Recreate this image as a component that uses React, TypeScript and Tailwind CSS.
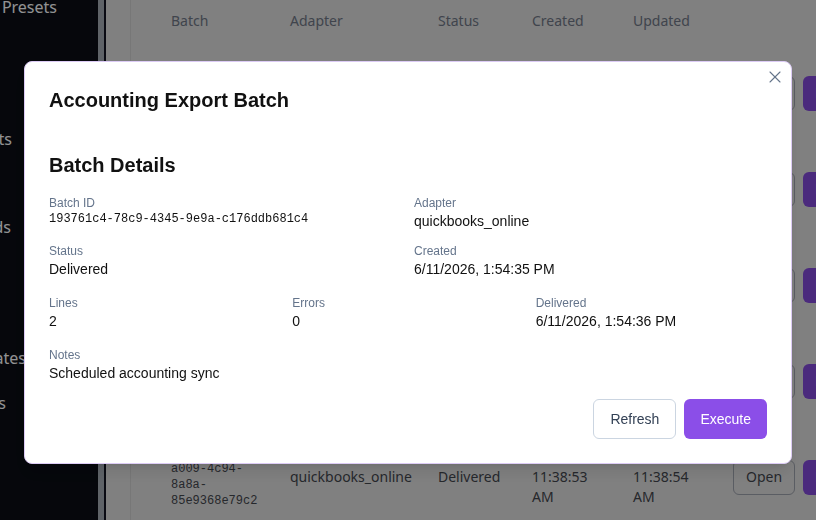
import { X } from "lucide-react";

type Row = {
  id: string;
  adapter: string;
  status: string;
  created: string;
  updated: string;
};

const rows: Row[] = [
  {
    id: "193761c4-78c9-4345-9e9a-c176ddb681c4",
    adapter: "quickbooks_online",
    status: "Delivered",
    created: "6/11/2026, 1:54:35 PM",
    updated: "6/11/2026, 1:54:36 PM",
  },
  {
    id: "7c02ae51-3b1d-4f6e-b2a0-19d4c7e0f3a8",
    adapter: "quickbooks_online",
    status: "Delivered",
    created: "6/11/2026, 12:40:12 PM",
    updated: "6/11/2026, 12:40:13 PM",
  },
  {
    id: "e4f9b830-61ac-4d27-9c5e-0a7b2d1e6f54",
    adapter: "xero",
    status: "Delivered",
    created: "6/11/2026, 12:02:47 PM",
    updated: "6/11/2026, 12:02:49 PM",
  },
  {
    id: "2ab8d6c1-95e3-47f0-8d1b-c3e50f9a72d6",
    adapter: "quickbooks_online",
    status: "Failed",
    created: "6/11/2026, 11:51:20 AM",
    updated: "6/11/2026, 11:51:22 AM",
  },
  {
    id: "5d2e1f07-a009-4c94-8a8a-85e9368e79c2",
    adapter: "quickbooks_online",
    status: "Delivered",
    created: "6/11/2026, 11:38:53 AM",
    updated: "6/11/2026, 11:38:54 AM",
  },
];

function Field({ label, children }: { label: string; children: React.ReactNode }) {
  return (
    <div>
      <div className="text-xs leading-4 text-[#64748b]">{label}</div>
      {children}
    </div>
  );
}

export default function App() {
  return (
    <div className="relative h-[520px] w-[816px] overflow-hidden">
      {/* page behind the dialog */}
      <div className="flex h-full font-['Noto_Sans',sans-serif]">
        <div className="flex h-full">
          <div className="flex h-full w-[98px] flex-col overflow-hidden bg-[#0a0c14] text-base leading-6 text-[#f3f4f6]">
            <div className="-mt-[5px] flex w-[57px] justify-end whitespace-nowrap">Export Presets</div>
            <div className="mt-[108px] flex w-[12px] justify-end whitespace-nowrap">Accounts</div>
            <div className="mt-[64px] flex w-[11px] justify-end whitespace-nowrap">Payment Methods</div>
            <div className="mt-[107px] flex w-[26px] justify-end whitespace-nowrap">Templates</div>
            <div className="mt-[21px] flex w-[6px] justify-end whitespace-nowrap">Settings</div>
          </div>
          <div className="h-full w-[6px] bg-[#9ea5ae]" />
          <div className="h-full w-[2px] bg-[#111320]" />
        </div>

        <main className="h-full flex-1 overflow-hidden bg-[#d5d5d5] pl-6">
          <div className="h-full border-l border-[#c6c6c6] pl-[40px] text-sm leading-5">
            <div className="grid h-[45px] grid-cols-[119px_148px_94px_101px_100px_1fr] items-start pt-[11px] text-[#6b7280]">
              <div>Batch</div>
              <div>Adapter</div>
              <div>Status</div>
              <div>Created</div>
              <div>Updated</div>
              <div />
            </div>
            {rows.map((r) => (
              <div
                key={r.id}
                className="grid h-[96px] grid-cols-[119px_148px_94px_101px_100px_1fr] items-center text-[#3f434a]"
              >
                <div className="w-[95px] font-['Liberation_Mono',monospace] text-xs leading-4">{r.id}</div>
                <div>{r.adapter}</div>
                <div>{r.status}</div>
                <div className="w-[74px]">{r.created}</div>
                <div className="w-[74px]">{r.updated}</div>
                <div className="flex gap-2 whitespace-nowrap">
                  <button className="h-[35px] rounded-md border border-[#969ba5] px-3">Open</button>
                  <button className="h-[35px] rounded-md bg-[#7d46d0] px-3 text-white">Execute</button>
                </div>
              </div>
            ))}
          </div>
        </main>
      </div>

      {/* dialog */}
      <div className="fixed inset-0 flex items-start justify-center bg-black/40 pt-[61px]">
        <div className="relative w-[768px] rounded-lg border border-[#dccbf5] bg-white p-6 font-['Liberation_Sans',Arial,sans-serif] shadow-lg">
          <button className="absolute right-[6px] top-[5px] text-[#64748b]" aria-label="Close">
            <X size={20} strokeWidth={1.3} />
          </button>

          <h2 className="text-xl font-bold leading-7 text-[#111111]">Accounting Export Batch</h2>

          <h3 className="mt-[37px] mb-4 text-xl font-bold leading-7 text-[#111111]">Batch Details</h3>

          <div className="grid grid-cols-2 gap-3">
            <Field label="Batch ID">
              <div className="font-['Liberation_Mono',monospace] text-xs leading-4 text-[#111111]">
                193761c4-78c9-4345-9e9a-c176ddb681c4
              </div>
            </Field>
            <Field label="Adapter">
              <div className="text-sm leading-5 text-[#111111]">quickbooks_online</div>
            </Field>
            <Field label="Status">
              <div className="text-sm leading-5 text-[#111111]">Delivered</div>
            </Field>
            <Field label="Created">
              <div className="text-sm leading-5 text-[#111111]">6/11/2026, 1:54:35 PM</div>
            </Field>
          </div>

          <div className="mt-4 grid grid-cols-3 gap-3">
            <Field label="Lines">
              <div className="text-sm leading-5 text-[#111111]">2</div>
            </Field>
            <Field label="Errors">
              <div className="text-sm leading-5 text-[#111111]">0</div>
            </Field>
            <Field label="Delivered">
              <div className="text-sm leading-5 text-[#111111]">6/11/2026, 1:54:36 PM</div>
            </Field>
          </div>

          <div className="mt-4">
            <Field label="Notes">
              <div className="text-sm leading-5 text-[#111111]">Scheduled accounting sync</div>
            </Field>
          </div>

          <div className="mt-4 flex justify-end gap-2">
            <button className="h-10 rounded-md border border-[#cbd5e1] bg-white px-4 text-sm text-[#334155]">
              Refresh
            </button>
            <button className="h-10 rounded-md bg-[#8b4ee8] px-4 text-sm text-white">Execute</button>
          </div>
        </div>
      </div>
    </div>
  );
}
